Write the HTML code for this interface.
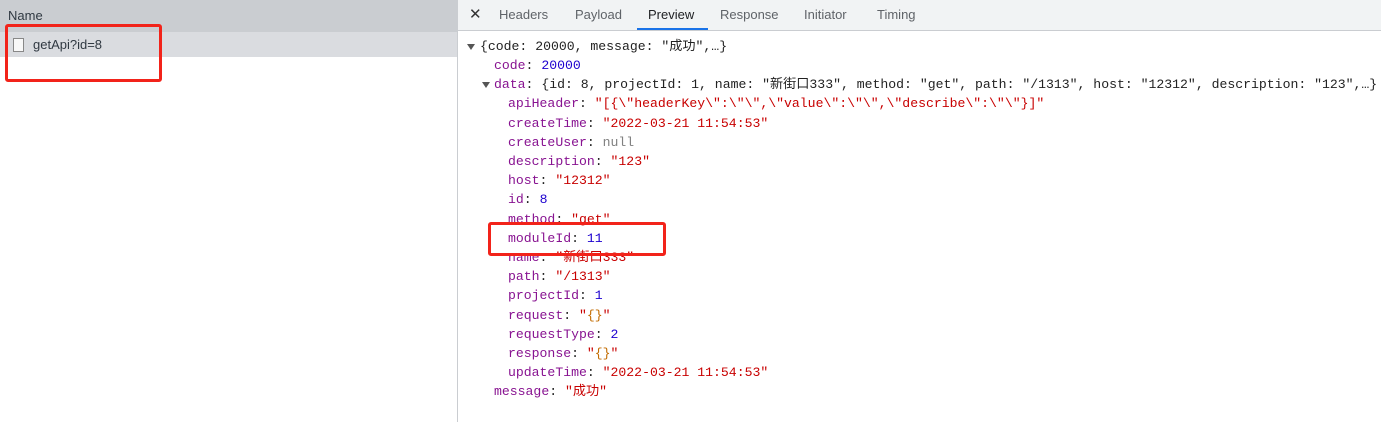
<!DOCTYPE html>
<html><head><meta charset="utf-8"><style>
body{margin:0;width:1381px;height:422px;overflow:hidden;background:#fff;position:relative;font-family:"Liberation Sans","Noto Sans CJK SC",sans-serif}
.left{position:absolute;left:0;top:0;width:457px;height:422px;background:#fff;border-right:1px solid #cacdd1}
.lh{position:absolute;left:0;top:0;width:457px;height:32px;background:#cacdd1;}
.lh span{position:absolute;left:8px;top:8px;font-size:13px;color:#303942}
.row{position:absolute;left:0;top:32px;width:457px;height:25px;background:#dadce0}
.row .ic{position:absolute;left:13px;top:6px;width:9px;height:12px;border:1px solid #888;background:#f8f8f8}
.row span{position:absolute;left:33px;top:5px;font-size:13px;color:#303942}
.tabs{position:absolute;left:458px;top:0;right:0;height:30px;background:#f1f3f4;border-bottom:1px solid #cacdd1}
.tabs span{position:absolute;top:7px;font-size:13px;color:#5f6368}
.tabs .act{color:#202124}
.ul{position:absolute;left:637px;top:28px;width:71px;height:2px;background:#1a73e8}
.l{position:absolute;white-space:pre;font-family:"Liberation Mono","Noto Sans CJK SC",monospace;font-size:13.15px;line-height:19px;height:19px;color:#222}
.l span{line-height:19px}
.k{color:#881391}.s{color:#c80000}.n{color:#1c00cf}.nl{color:#808080}.o{color:#c26b00}
.tri{position:absolute;width:0;height:0;border-left:4px solid transparent;border-right:4px solid transparent;border-top:6px solid #555}
.box{position:absolute;border:3px solid #f2231a;border-radius:3px}
</style></head><body>
<div class="left"><div class="lh"><span>Name</span></div>
<div class="row"><div class="ic"></div><span>getApi?id=8</span></div></div>
<div class="tabs">
<span style="left:11px;font-size:15px;top:5px;color:#333">✕</span>
<span style="left:41px">Headers</span><span style="left:117px">Payload</span>
<span class="act" style="left:190px">Preview</span><span style="left:262px">Response</span>
<span style="left:346px">Initiator</span><span style="left:419px">Timing</span>
</div>
<div class="ul"></div>
<div class="tri" style="left:467px;top:44px"></div>
<div class="tri" style="left:482px;top:82px"></div>
<div class="l" style="left:480px;top:37px">{code: 20000, message: "成功",…}</div>
<div class="l" style="left:494px;top:56px"><span class="k">code</span>: <span class="n">20000</span></div>
<div class="l" style="left:494px;top:75px"><span class="k">data</span>: {id: 8, projectId: 1, name: "新街口333", method: "get", path: "/1313", host: "12312", description: "123",…}</div>
<div class="l" style="left:508px;top:94px"><span class="k">apiHeader</span>: <span class="s">"[{\"headerKey\":\"\",\"value\":\"\",\"describe\":\"\"}]"</span></div>
<div class="l" style="left:508px;top:114px"><span class="k">createTime</span>: <span class="s">"2022-03-21 11:54:53"</span></div>
<div class="l" style="left:508px;top:133px"><span class="k">createUser</span>: <span class="nl">null</span></div>
<div class="l" style="left:508px;top:152px"><span class="k">description</span>: <span class="s">"123"</span></div>
<div class="l" style="left:508px;top:171px"><span class="k">host</span>: <span class="s">"12312"</span></div>
<div class="l" style="left:508px;top:190px"><span class="k">id</span>: <span class="n">8</span></div>
<div class="l" style="left:508px;top:210px"><span class="k">method</span>: <span class="s">"get"</span></div>
<div class="l" style="left:508px;top:229px"><span class="k">moduleId</span>: <span class="n">11</span></div>
<div class="l" style="left:508px;top:248px"><span class="k">name</span>: <span class="s">"新街口333"</span></div>
<div class="l" style="left:508px;top:267px"><span class="k">path</span>: <span class="s">"/1313"</span></div>
<div class="l" style="left:508px;top:286px"><span class="k">projectId</span>: <span class="n">1</span></div>
<div class="l" style="left:508px;top:306px"><span class="k">request</span>: <span class="s">"<span class="o">{}</span>"</span></div>
<div class="l" style="left:508px;top:325px"><span class="k">requestType</span>: <span class="n">2</span></div>
<div class="l" style="left:508px;top:344px"><span class="k">response</span>: <span class="s">"<span class="o">{}</span>"</span></div>
<div class="l" style="left:508px;top:363px"><span class="k">updateTime</span>: <span class="s">"2022-03-21 11:54:53"</span></div>
<div class="l" style="left:494px;top:382px"><span class="k">message</span>: <span class="s">"成功"</span></div>
<div class="box" style="left:5px;top:24px;width:151px;height:52px"></div>
<div class="box" style="left:488px;top:222px;width:172px;height:28px"></div>
</body></html>
